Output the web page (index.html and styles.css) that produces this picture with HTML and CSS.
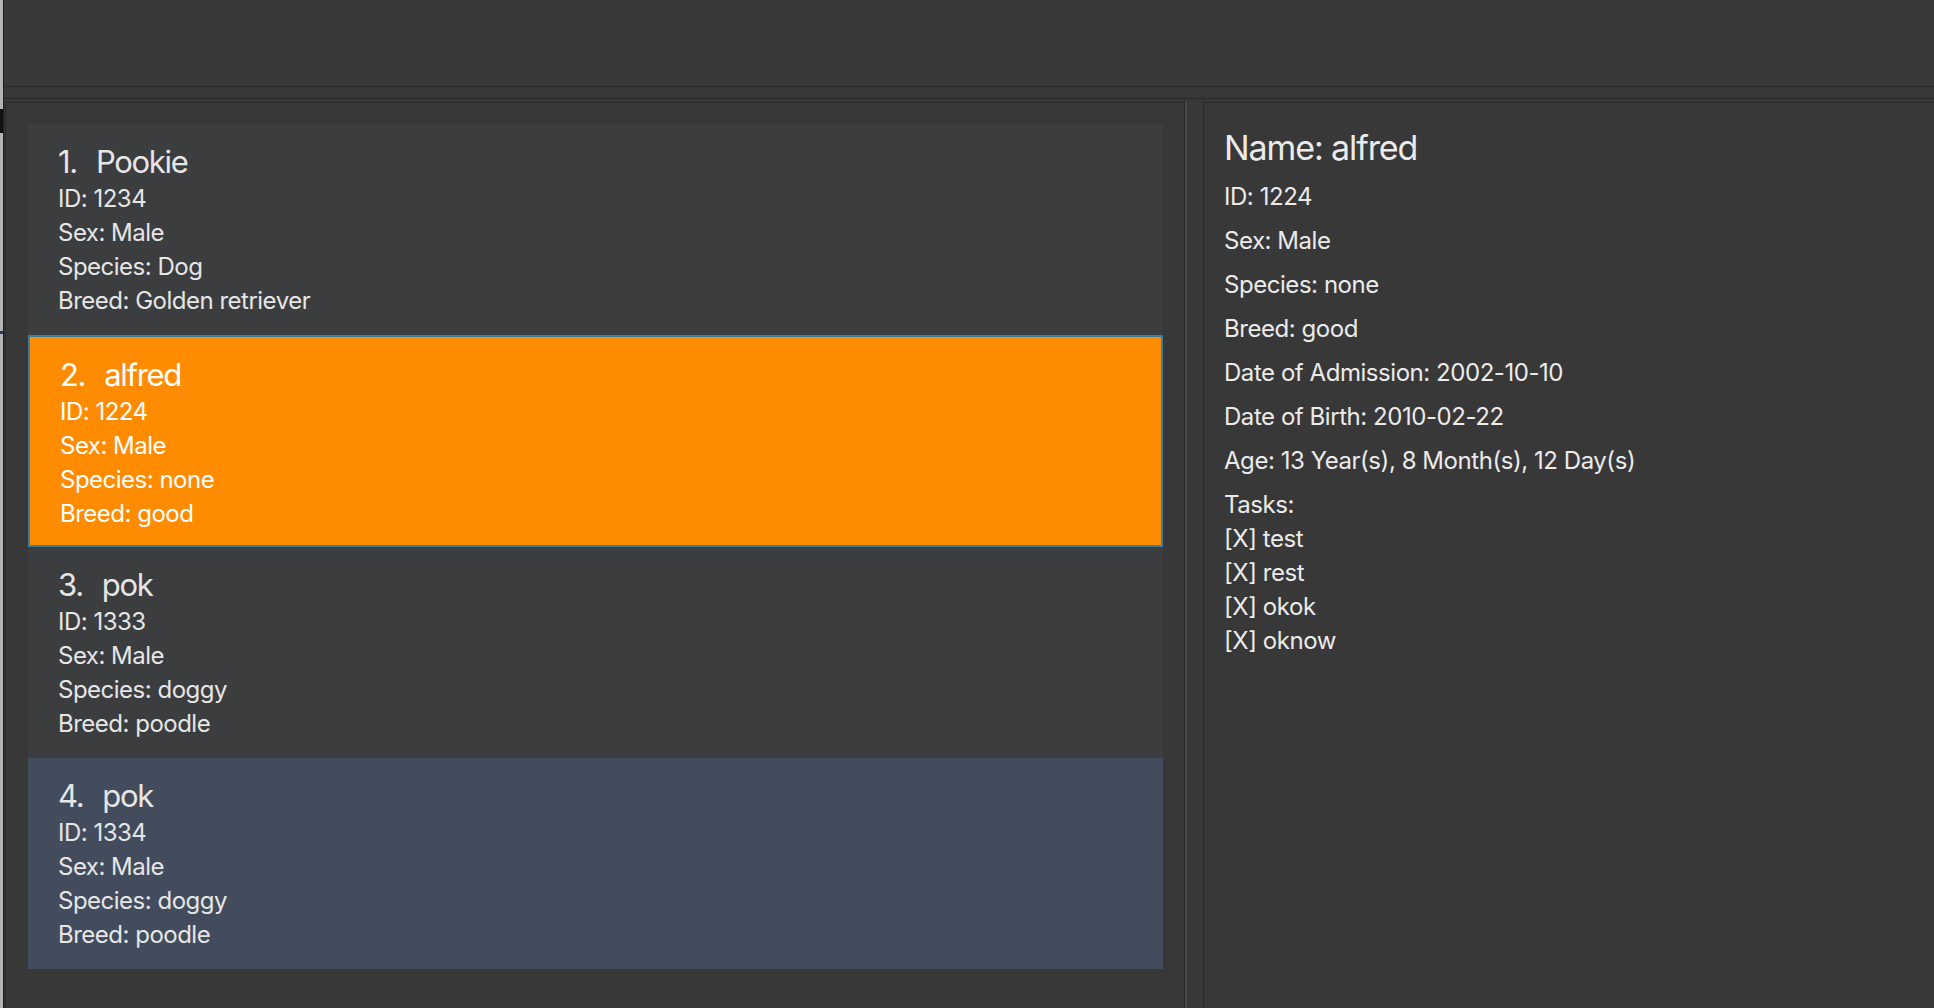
FILE: index.html
```html
<!DOCTYPE html>
<html lang="en">
<head>
<meta charset="utf-8">
<title>Pet list</title>
<link rel="stylesheet" href="styles.css">
</head>
<body>
<div class="window">
  <div class="edge">
    <span class="edge-mark edge-mark-black"></span>
    <span class="edge-mark edge-mark-navy"></span>
  </div>
  <div class="app">
    <div class="topbar"></div>
    <div class="band"></div>
    <div class="content">
      <div class="list-panel">
        <div class="card">
          <div class="card-title"><span>1.</span><span>Pookie</span></div>
          <div class="card-line">ID: 1234</div>
          <div class="card-line">Sex: Male</div>
          <div class="card-line">Species: Dog</div>
          <div class="card-line">Breed: Golden retriever</div>
        </div>
        <div class="card card-selected">
          <div class="card-title"><span>2.</span><span>alfred</span></div>
          <div class="card-line">ID: 1224</div>
          <div class="card-line">Sex: Male</div>
          <div class="card-line">Species: none</div>
          <div class="card-line">Breed: good</div>
        </div>
        <div class="card">
          <div class="card-title"><span>3.</span><span>pok</span></div>
          <div class="card-line">ID: 1333</div>
          <div class="card-line">Sex: Male</div>
          <div class="card-line">Species: doggy</div>
          <div class="card-line">Breed: poodle</div>
        </div>
        <div class="card card-hover">
          <div class="card-title"><span>4.</span><span>pok</span></div>
          <div class="card-line">ID: 1334</div>
          <div class="card-line">Sex: Male</div>
          <div class="card-line">Species: doggy</div>
          <div class="card-line">Breed: poodle</div>
        </div>
      </div>
      <div class="divider"></div>
      <div class="detail-panel">
        <div class="detail-name">Name: alfred</div>
        <div class="detail-line">ID: 1224</div>
        <div class="detail-line">Sex: Male</div>
        <div class="detail-line">Species: none</div>
        <div class="detail-line">Breed: good</div>
        <div class="detail-line">Date of Admission: 2002-10-10</div>
        <div class="detail-line">Date of Birth: 2010-02-22</div>
        <div class="detail-line">Age: 13 Year(s), 8 Month(s), 12 Day(s)</div>
        <div class="detail-line">Tasks:</div>
        <div class="task-list">
          <div class="task">[X] test</div>
          <div class="task">[X] rest</div>
          <div class="task">[X] okok</div>
          <div class="task">[X] oknow</div>
        </div>
      </div>
    </div>
  </div>
</div>
</body>
</html>
```

FILE: styles.css
```css
* {
  box-sizing: border-box;
}

html, body {
  margin: 0;
  padding: 0;
  width: 1934px;
  height: 1008px;
  overflow: hidden;
  background: #383838;
  font-family: Inter, "Noto Sans", sans-serif;
}

.window {
  display: flex;
  width: 1934px;
  height: 1008px;
}

.edge {
  position: relative;
  width: 4px;
  flex: none;
  background: #b4b4b4;
  border-right: 1px solid #1e1e1e;
}

.edge-mark {
  position: absolute;
  left: 0;
  width: 3px;
}

.edge-mark-black {
  top: 109px;
  height: 24px;
  background: #111111;
}

.edge-mark-navy {
  top: 331px;
  height: 3px;
  background: #2a3470;
}

.app {
  flex: 1;
  display: flex;
  flex-direction: column;
  min-width: 0;
}

.topbar {
  height: 87px;
  flex: none;
  background: #393939;
  border-bottom: 1px solid #2a2a2a;
}

.band {
  height: 12px;
  flex: none;
  background: #383838;
  border-bottom: 1px solid #2a2a2a;
  margin-bottom: 3px;
}

.content {
  flex: 1;
  display: flex;
  min-height: 0;
}

.list-panel {
  width: 1180px;
  flex: none;
  margin-left: 1px;
  padding: 21px 21px 0 22px;
  border: 1px solid #2a2a2a;
  border-bottom: none;
  background: #383838;
  display: flex;
  flex-direction: column;
}

.divider {
  width: 2px;
  flex: none;
  background: #4a4a4a;
  margin-right: 16px;
}

.detail-panel {
  flex: 1;
  border-left: 1px solid #2a2a2a;
  border-top: 1px solid #2a2a2a;
  padding: 24px 20px 0 20px;
  color: #ebebeb;
  background: #383838;
}

.card {
  height: 211px;
  flex: none;
  padding: 22px 29px 0 30px;
  background: #3c3d3f;
  color: #e6e6e6;
}

.card-selected {
  height: 212px;
  background: #ff8c00;
  border: 2px solid #3a7fa0;
  padding: 22px 27px 0 30px;
  color: #ffffff;
}

.card-hover {
  background: #424c5d;
}

.card-title {
  display: flex;
  gap: 19px;
  font-size: 31px;
  line-height: 31px;
  height: 31px;
  margin-bottom: 5px;
  letter-spacing: -1.3px;
}

.card-line {
  font-size: 24px;
  line-height: 34px;
  height: 34px;
  white-space: nowrap;
  letter-spacing: -0.5px;
}

.detail-name {
  font-size: 34px;
  line-height: 41px;
  height: 41px;
  margin-bottom: 12px;
  letter-spacing: -1.1px;
}

.detail-line {
  font-size: 24px;
  line-height: 34px;
  height: 34px;
  margin-bottom: 10px;
  white-space: nowrap;
  letter-spacing: -0.45px;
}

.task-list {
  margin-top: -10px;
}

.task {
  font-size: 24px;
  line-height: 34px;
  height: 34px;
  white-space: nowrap;
  letter-spacing: -0.45px;
}
```
